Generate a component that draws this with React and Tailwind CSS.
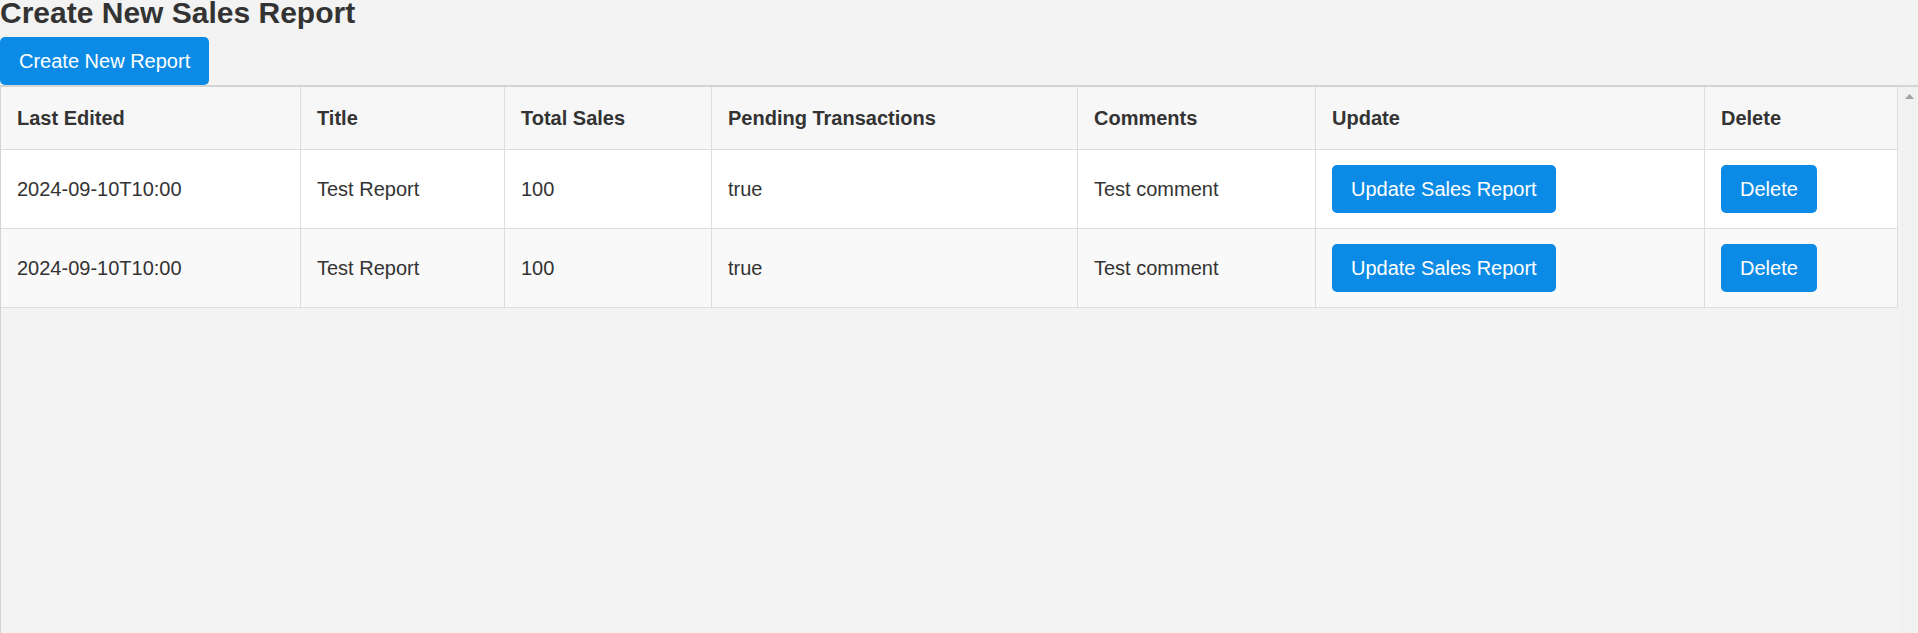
import React from "react";

const rows = [
  { edited: "2024-09-10T10:00", title: "Test Report", total: "100", pending: "true", comments: "Test comment", bg: "bg-white" },
  { edited: "2024-09-10T10:00", title: "Test Report", total: "100", pending: "true", comments: "Test comment", bg: "bg-[#f9f9f9]" },
];

const cols = [
  { label: "Last Edited", w: "w-[300px]" },
  { label: "Title", w: "w-[204px]" },
  { label: "Total Sales", w: "w-[207px]" },
  { label: "Pending Transactions", w: "w-[366px]" },
  { label: "Comments", w: "w-[238px]" },
  { label: "Update", w: "w-[389px]" },
  { label: "Delete", w: "w-[193px]" },
];

function Btn({ children }) {
  return (
    <button className="h-[48px] px-[19px] rounded-[5px] bg-[#0b8be6] text-white text-[20px] leading-[23px] whitespace-nowrap">
      {children}
    </button>
  );
}

export default function App() {
  const td = "h-[79px] px-4 py-0 align-middle border-r border-b border-[#dddddd] text-left font-normal";
  return (
    <div
      className="h-[633px] overflow-hidden flex flex-col bg-[#f3f3f3] text-[#333333]"
      style={{ fontFamily: '"Liberation Sans", Arial, sans-serif' }}
    >
      <h1 className="text-[30px] font-bold leading-[26px] mb-[11px] text-[#333333]">
        Create New Sales Report
      </h1>
      <div>
        <Btn>Create New Report</Btn>
      </div>
      <div className="flex-1 flex border-t-2 border-l border-[#d4d4d4] min-h-0">
        <div className="flex-1 min-w-0">
          <table className="table-fixed border-separate border-spacing-0 w-[1897px] text-[20px] leading-[23px]">
            <thead>
              <tr className="bg-[#f7f7f7]">
                {cols.map((c) => (
                  <th
                    key={c.label}
                    className={`${c.w} h-[63px] px-4 py-0 align-middle border-r border-b border-[#dddddd] text-left font-bold`}
                  >
                    {c.label}
                  </th>
                ))}
              </tr>
            </thead>
            <tbody>
              {rows.map((r, i) => (
                <tr key={i} className={r.bg}>
                  <td className={td}>{r.edited}</td>
                  <td className={td}>{r.title}</td>
                  <td className={td}>{r.total}</td>
                  <td className={td}>{r.pending}</td>
                  <td className={td}>{r.comments}</td>
                  <td className={td}>
                    <Btn>Update Sales Report</Btn>
                  </td>
                  <td className={td}>
                    <Btn>Delete</Btn>
                  </td>
                </tr>
              ))}
            </tbody>
          </table>
        </div>
        <div className="w-[17px] shrink-0 bg-[#f1f1f1] flex justify-center pt-[7px]">
          <svg width="9" height="5" viewBox="0 0 9 5" className="block">
            <polygon points="4.5,0 9,5 0,5" fill="#a3a3a3" />
          </svg>
        </div>
      </div>
    </div>
  );
}
